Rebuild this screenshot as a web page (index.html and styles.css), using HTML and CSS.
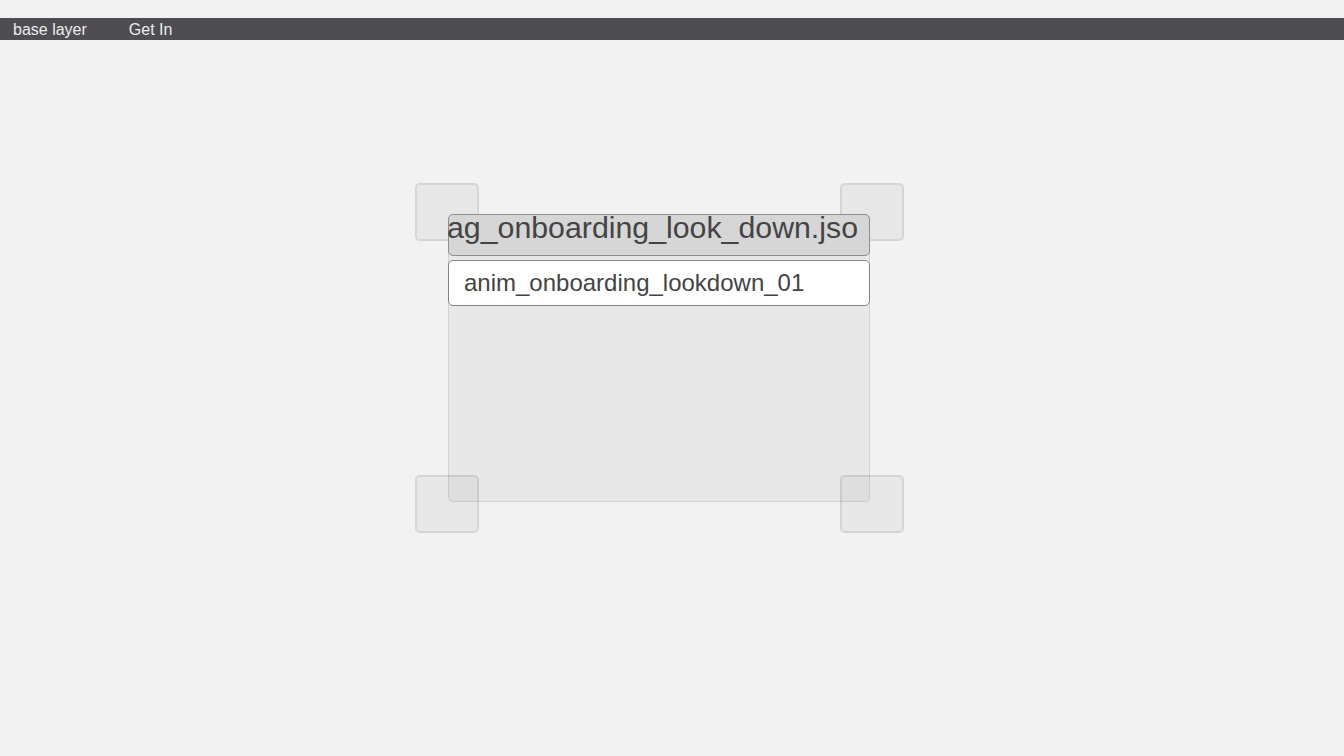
FILE: index.html
```html
<!DOCTYPE html>
<html>
<head>
<meta charset="utf-8">
<link rel="stylesheet" href="styles.css">
</head>
<body>
<div class="topbar">
  <span class="menu-item">base layer</span>
  <span class="menu-item">Get In</span>
</div>
<div class="stage">
  <div class="widget">
    <div class="handle handle-tl"></div>
    <div class="handle handle-tr"></div>
    <div class="handle handle-bl"></div>
    <div class="handle handle-br"></div>
    <div class="panel">
      <div class="title">ag_onboarding_look_down.jso</div>
      <div class="field">anim_onboarding_lookdown_01</div>
    </div>
  </div>
</div>
</body>
</html>
```
FILE: styles.css
```css
html, body {
  margin: 0;
  padding: 0;
  background: #f2f2f2;
  font-family: "Liberation Sans", Arial, sans-serif;
}
html, body {
  min-height: 100vh;
}
.topbar {
  margin-top: 18px;
  height: 22px;
  background: #4e4d52;
  display: flex;
  gap: 42px;
  padding-left: 13px;
  color: #ececec;
  font-size: 16px;
  line-height: 24px;
}
.stage {
  padding-top: 174px;
  padding-left: 448px;
  padding-bottom: 60px;
}
.widget {
  position: relative;
  width: 422px;
}
.panel {
  width: 420px;
  height: 286px;
  background: #e8e8e8;
  border: 1px solid #d2d2d2;
  border-radius: 5px;
}
.title {
  position: relative;
  z-index: 2;
  margin: -1px -1px 0;
  height: 40px;
  background: #d6d6d6;
  border: 1px solid #8f8f8f;
  border-radius: 5px;
  color: #444;
  font-size: 30.3px;
  line-height: 26px;
  white-space: nowrap;
  text-indent: -2px;
}
.field {
  position: relative;
  z-index: 2;
  margin: 4px -1px 0;
  height: 44px;
  background: #fff;
  border: 1px solid #858585;
  border-radius: 5px;
  color: #444;
  font-size: 24px;
  line-height: 44px;
  padding-left: 15px;
}
.handle {
  position: absolute;
  z-index: 1;
  width: 60px;
  height: 54px;
  background: rgba(0, 0, 0, 0.045);
  border: 2px solid rgba(0, 0, 0, 0.08);
  border-radius: 5px;
}
.handle-tl { left: -33px; top: -31px; }
.handle-tr { left: 392px; top: -31px; }
.handle-bl { left: -33px; top: 261px; }
.handle-br { left: 392px; top: 261px; }
```
